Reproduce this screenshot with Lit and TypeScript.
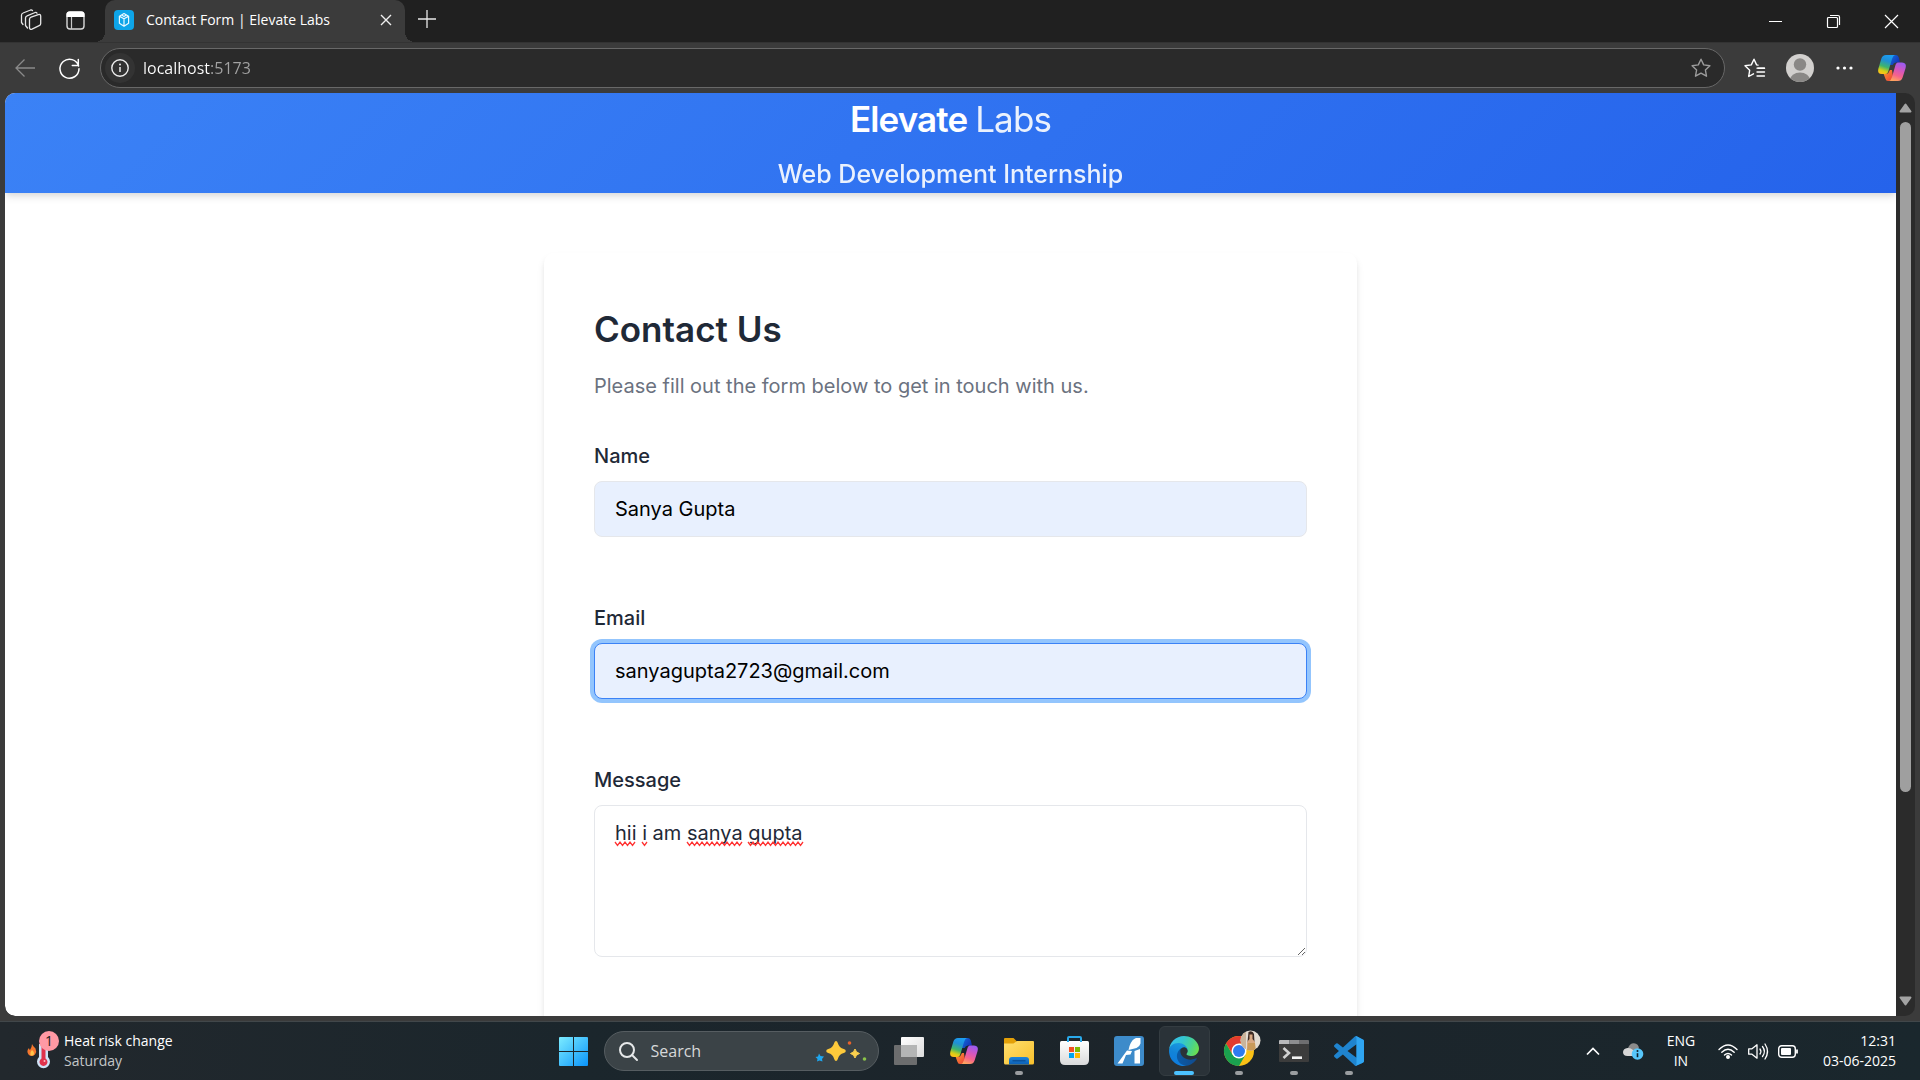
import { LitElement, html, css, svg } from "lit";
import { customElement } from "lit/decorators.js";

const reset = css`
  :host, *, *::before, *::after { box-sizing: border-box; }
  button { margin: 0; padding: 0; border: 0; background: none; color: inherit; font: inherit;
    display: flex; align-items: center; justify-content: center; flex: none; }
  input, textarea { margin: 0; font: inherit; color: inherit; outline: none; }
  svg { display: block; fill: none; overflow: visible; flex: none; }
`;

@customElement("copilot-icon")
class CopilotIcon extends LitElement {
  static styles = [reset, css`:host { display: block; flex: none; }`];
  render() {
    return html`<svg width="28" height="26" viewBox="0 0 28 26" aria-hidden="true">
      <defs>
        <linearGradient id="cool" x1="0.6" y1="0" x2="0.3" y2="1">
          <stop offset="0" stop-color="#1c9df0"/><stop offset=".3" stop-color="#1f8fd6"/>
          <stop offset=".62" stop-color="#3fb56b"/><stop offset=".85" stop-color="#d9cf16"/><stop offset="1" stop-color="#ffc21a"/>
        </linearGradient>
        <linearGradient id="warm" x1="0.7" y1="0" x2="0.35" y2="1">
          <stop offset="0" stop-color="#9a5bf2"/><stop offset=".4" stop-color="#d556bd"/>
          <stop offset=".7" stop-color="#f5628c"/><stop offset="1" stop-color="#ffa35e"/>
        </linearGradient>
        <linearGradient id="deep" x1="0" y1="0" x2="1" y2="0.6">
          <stop offset="0" stop-color="#1273e0"/><stop offset="1" stop-color="#1432b4"/>
        </linearGradient>
        <linearGradient id="ember" x1="0" y1="0" x2="1" y2="1">
          <stop offset="0" stop-color="#ff9a2e"/><stop offset="1" stop-color="#ea3f3a"/>
        </linearGradient>
      </defs>
      <path fill="url(#deep)" d="M13 0h5q2.300 0 2.800 2.500L22 7.500h-4q-2.500 0-3.300 2.500L11 10z"/>
      <path fill="url(#ember)" d="M5.500 18.500H10L12 15h2l1 7q-1.500 4-4 4h-1q-2 0-2.700-2.500z"/>
      <path fill="url(#cool)" d="M8 0h9q-2 .5-3 4l-3.400 11.500Q9.700 19 7 19H4Q-1 19 .4 13.500l3-10Q4.500 0 8 0z"/>
      <path fill="url(#warm)" d="M20 7.500h4q5 .3 3.600 5.500l-3 9.500Q23.500 26 20 26h-9q2-.5 3-4l3.200-11Q18 7.500 20 7.500z"/>
    </svg>`;
  }
}

@customElement("browser-tabs")
class BrowserTabs extends LitElement {
  static styles = [reset, css`
    :host { display: flex; height: 42px; background: #202020; color: #fff;
      font: 14px/20px "Open Sans", "Noto Sans", sans-serif; align-items: stretch; }
    .tools { display: flex; width: 105px; padding-left: 9px; }
    .tools button { width: 44px; height: 40px; }
    .tab { position: relative; display: flex; align-items: center; width: 300px; padding: 0 9px 2px 9px;
      background: #3b3b3b; border-radius: 10px 10px 0 0; }
    .tab::before, .tab::after { content: ""; position: absolute; bottom: 0; width: 10px; height: 10px; }
    .tab::before { right: 100%; background: radial-gradient(circle at 0 0, transparent 10px, #3b3b3b 10px); }
    .tab::after { left: 100%; background: radial-gradient(circle at 100% 0, transparent 10px, #3b3b3b 10px); }
    .title { flex: 1; margin-left: 12px; white-space: nowrap; }
    .tab button { width: 20px; height: 20px; }
    .plus { width: 44px; height: 38px; }
    .window { display: flex; margin-left: auto; }
    .window button { width: 58px; height: 42px; }
  `];
  render() {
    return html`
      <div class="tools">
        <button aria-label="Workspaces">
          <svg width="22" height="22" viewBox="0 0 22 22" stroke="#e6e6e6" stroke-width="1.300" stroke-linejoin="round" stroke-linecap="round">
            <path fill="#202020" d="M9.500 10.200q.2-1.500 1.600-2l7.200-2.600q2.200-.6 2.400 1.400v7.500q0 1.600-1.500 2.200l-7.200 3.400q-2.300.8-2.500-1.400z"/>
            <path d="M5.500 16.500V8.800q.2-1.500 1.600-2l8-3.300q1.200-.4 1.900.6M1.500 13.500V6q.2-1.500 1.600-2l7.500-3q1.200-.3 1.900.6M1.500 13.500l1.500 2M5.500 16.500l2 2.500"/>
          </svg>
        </button>
        <button aria-label="Tab actions">
          <svg width="19" height="19" viewBox="0 0 19 19">
            <rect x="1" y="1" width="17" height="17" rx="3" stroke="#d8d8d8" stroke-width="1.400"/>
            <path fill="#fff" d="M.5 6V3.500Q.5.500 3.500.500h12q3 0 3 3V6z"/><path d="M5.500 6v12" stroke="#c8c8c8" stroke-width="1.200"/>
          </svg>
        </button>
      </div>
      <div class="tab">
        <svg width="20" height="20" viewBox="0 0 20 20">
          <rect width="20" height="20" rx="4" fill="#0ea5e9"/>
          <path d="M10 3.600l4.600 2.600v7L10 16.200l-4.600-3v-7zM5.600 6.400L10 8.800l4.400-2.400M10 8.800v7M7.600 4.900L10 6.400l2.400-1.500" stroke="#e9f8ff" stroke-width="1.200" stroke-linejoin="round"/>
        </svg>
        <span class="title">Contact Form | Elevate Labs</span>
        <button aria-label="Close tab"><svg width="10" height="10" viewBox="0 0 10 10"><path d="M0 0l10 10M10 0L0 10" stroke="#f0f0f0" stroke-width="1.400"/></svg></button>
      </div>
      <button class="plus" aria-label="New tab"><svg width="18" height="18" viewBox="0 0 18 18"><path d="M9 0v18M0 9h18" stroke="#e8e8e8" stroke-width="1.300"/></svg></button>
      <div class="window">
        <button aria-label="Minimize"><svg width="13" height="13" viewBox="0 0 13 13"><path d="M0 6.500h13" stroke="#fff"/></svg></button>
        <button aria-label="Restore"><svg width="13" height="13" viewBox="0 0 13 13" stroke="#fff" stroke-width="1.200"><rect x=".5" y="2.500" width="10" height="10" rx="1"/><path d="M3 .5h8q1.500 0 1.500 1.500v8"/></svg></button>
        <button aria-label="Close"><svg width="13" height="13" viewBox="0 0 13 13"><path d="M0 0l13 13M13 0L0 13" stroke="#fff" stroke-width="1.200"/></svg></button>
      </div>`;
  }
}

const star = svg`<path d="M10 1.200l2.700 5.700 6.200.8-4.500 4.300 1.100 6.200L10 15.200l-5.500 3 1.100-6.200L1.100 7.700l6.200-.8z"/>`;

@customElement("browser-toolbar")
class BrowserToolbar extends LitElement {
  static styles = [reset, css`
    :host { display: flex; align-items: center; height: 51px; padding: 0 3px 0 2px; background: #3b3b3b; color: #fff;
      font: 16px/24px "Open Sans", "Noto Sans", sans-serif; border-top: 1px solid #333; }
    button { width: 45px; height: 40px; }
    .address { flex: 1; display: flex; align-items: center; height: 40px; margin: 0 7px 0 8px; padding: 0 1px 0 4px;
      background: #2a2a2a; border: 1px solid #686868; border-radius: 20px; }
    .info { width: 30px; height: 30px; border-radius: 15px; background: #333; }
    .url { flex: 1; min-width: 0; height: 30px; padding: 0; border: 0; margin-left: 8px;
      color: transparent; background: linear-gradient(90deg, #fff 68px, #a3a3a3 68px); background-clip: text; -webkit-background-clip: text; }
    .copilot { width: 50px; }
  `];
  render() {
    return html`
      <button aria-label="Back"><svg width="20" height="18" viewBox="0 0 20 18"><path d="M20 9H1M9.500.500L1 9l8.500 8.500" stroke="#8a8a8a" stroke-width="1.300"/></svg></button>
      <button aria-label="Refresh"><svg width="21" height="21" viewBox="0 0 21 21" stroke="#fff" stroke-width="1.500" stroke-linecap="round"><path d="M19.600 8A9.500 9.500 0 1 0 20 10.800M19.300 1.500v6h-6"/></svg></button>
      <div class="address">
        <button class="info" aria-label="Site information"><svg width="18" height="18" viewBox="0 0 18 18"><circle cx="9" cy="9" r="8.200" stroke="#eee" stroke-width="1.400"/><path d="M9 8v5" stroke="#eee" stroke-width="1.500"/><circle cx="9" cy="5.500" r="1" fill="#eee"/></svg></button>
        <input class="url" aria-label="Address" value="localhost:5173">
        <button aria-label="Add to favorites"><svg width="20" height="20" viewBox="0 0 20 20" stroke="#9c9c9c" stroke-width="1.400" stroke-linejoin="round">${star}</svg></button>
      </div>
      <button aria-label="Favorites"><svg width="21" height="20" viewBox="0 0 21 20" stroke="#fff" stroke-width="1.400" stroke-linejoin="round" stroke-linecap="round">
        <path d="M9.500 15.800L4.700 18.500l1-6.300L1 7.800l6.300-.9L10 1.200l2.600 5.700 1.400.2"/><path d="M14 10.200h6.500M13 14h7.500M14 17.800"/><path d="M13 10.200h7.500M13 18h7.500" stroke-width="1.300"/></svg></button>
      <button aria-label="Profile"><svg width="28" height="28" viewBox="0 0 28 28">
        <defs><clipPath id="round"><circle cx="14" cy="14" r="14"/></clipPath></defs>
        <g clip-path="url(#round)"><rect width="28" height="28" fill="#d2d0ce"/><circle cx="14" cy="10.500" r="6.200" fill="#8a8886"/><ellipse cx="14" cy="26" rx="10" ry="7.500" fill="#8a8886"/></g></svg></button>
      <button aria-label="Settings and more"><svg width="17" height="4" viewBox="0 0 17 4"><g fill="#fff"><circle cx="2" cy="2" r="1.600"/><circle cx="8.500" cy="2" r="1.600"/><circle cx="15" cy="2" r="1.600"/></g></svg></button>
      <button class="copilot" aria-label="Copilot"><copilot-icon></copilot-icon></button>`;
  }
}

@customElement("contact-page")
class ContactPage extends LitElement {
  static styles = [reset, css`
    :host { display: flex; flex: 1; min-height: 0; padding: 0 5px 5px; background: #3b3b3b; }
    .frame { display: flex; flex: 1; min-width: 0; border-radius: 10px; overflow: hidden; background: #2b2b2b; }
    .page { flex: 1; min-width: 0; overflow: hidden; background: #fff; color: #1f2937;
      border-radius: 0 0 0 10px; font: 20px/30px Inter, sans-serif; }
    .banner { display: flex; flex-direction: column; align-items: center; gap: 10px; color: #fff;
      background: linear-gradient(135deg, #3b82f6, #2563eb);
      box-shadow: 0 5px 8px -1px rgba(0,0,0,.1), 0 3px 5px -1px rgba(0,0,0,.06); }
    h1, h2, p { margin: 0; }
    h1 { font-size: 35px; line-height: 52px; font-weight: 600; letter-spacing: -0.025em; }
    h1 span { font-weight: 400; opacity: .9; }
    .banner p { font-size: 25px; line-height: 38px; font-weight: 500; opacity: .9; }
    .card { max-width: 813px; margin: 60px auto; padding: 50px; border-radius: 10px; background: #fff;
      box-shadow: 0 5px 8px -1px rgba(0,0,0,.1), 0 3px 5px -1px rgba(0,0,0,.06); }
    h2 { font-size: 35px; line-height: 52px; font-weight: 600; }
    .intro { margin: 16px 0 40px; color: #6b7280; }
    .field { display: flex; flex-direction: column; gap: 10px; margin-bottom: 66px; position: relative; }
    label { font-weight: 500; }
    .box { width: 100%; padding: 12px 20px; border: 1px solid #e5e7eb; border-radius: 8px; background: #fff; }
    input.box { height: 56px; background: #e8f0fe; color: #000; }
    textarea.box { display: block; height: 152px; resize: vertical; }
    input.active { border-color: #3b82f6; box-shadow: 0 0 0 4px #93c5fd; }
    .squiggles { position: absolute; left: 21px; top: 76px; }
    .scroll { display: flex; flex-direction: column; align-items: center; width: 19px; padding: 10px 0; }
    .track { flex: 1; width: 11px; margin: 9px 0; }
    .thumb { height: 77.5%; border-radius: 6px; background: #9f9f9f; }
  `];

  private wave(from: number, to: number) {
    let d = `M${from} 0`;
    for (let x = from, i = 1; x + 2.5 <= to; x += 2.5, i++) d += `l2.5 ${i % 2 ? 3.5 : -3.5}`;
    return svg`<path d=${d} stroke="#f33" stroke-width="1.300"/>`;
  }

  render() {
    return html`<div class="frame">
      <main class="page">
        <header class="banner">
          <h1>Elevate <span>Labs</span></h1>
          <p>Web Development Internship</p>
        </header>
        <form class="card">
          <h2>Contact Us</h2>
          <p class="intro">Please fill out the form below to get in touch with us.</p>
          <div class="field"><label for="name">Name</label><input class="box" id="name" type="text" value="Sanya Gupta"></div>
          <div class="field"><label for="email">Email</label><input class="box active" id="email" type="email" value="sanyagupta2723@gmail.com"></div>
          <div class="field"><label for="message">Message</label>
            <textarea class="box" id="message" .value=${"hii i am sanya gupta"}></textarea>
            <svg class="squiggles" width="190" height="5" viewBox="0 -1 190 5" aria-hidden="true">
              ${this.wave(0, 22)}${this.wave(27, 32)}${this.wave(72, 128)}${this.wave(133, 188)}
            </svg>
          </div>
        </form>
      </main>
      <div class="scroll">
        <svg width="13" height="10" viewBox="0 0 13 10"><path d="M6.500 1.500L11.500 8.500h-10z" fill="#a3a3a3" stroke="#a3a3a3" stroke-width="2" stroke-linejoin="round"/></svg>
        <div class="track"><div class="thumb"></div></div>
        <svg width="13" height="10" viewBox="0 0 13 10"><path d="M6.500 8.500L11.500 1.500h-10z" fill="#a3a3a3" stroke="#a3a3a3" stroke-width="2" stroke-linejoin="round"/></svg>
      </div>
    </div>`;
  }
}

const folder = html`<svg width="30" height="27" viewBox="0 0 30 27">
  <defs><linearGradient id="fd" x1="0" y1="0" x2="1" y2="1"><stop offset="0" stop-color="#ffdf6e"/><stop offset="1" stop-color="#f8c02c"/></linearGradient>
  <linearGradient id="fb" x1="0" y1="0" x2="0" y2="1"><stop offset="0" stop-color="#1b86dd"/><stop offset="1" stop-color="#0d5fb4"/></linearGradient></defs>
  <path fill="#e3a008" d="M0 1q0-1 1-1h8.500l3.500 3.500V8H0z"/><path fill="url(#fd)" d="M0 5.500h9.500L13 3h16q1 0 1 1v21q0 1.500-1.500 1.500h-27Q0 26.500 0 25z"/>
  <path fill="url(#fb)" d="M5 26.500V22q0-3 3-3h14q3 0 3 3v4.500z"/><path d="M8.500 22.800h13" stroke="#0a4c92" stroke-width="1.200"/></svg>`;

const store = html`<svg width="29" height="30" viewBox="0 0 29 30">
  <defs><linearGradient id="bag" x1="0" y1="0" x2="0" y2="1"><stop offset="0" stop-color="#fff"/><stop offset="1" stop-color="#d9dadb"/></linearGradient></defs>
  <path fill="url(#bag)" d="M0 6.500q0-1.500 1.500-1.500h26q1.500 0 1.500 1.500V24q0 5-5 5H5q-5 0-5-5z"/>
  <path d="M8 6V2q0-1 1-1h11q1 0 1 1v4" stroke="#29a9ea" stroke-width="2"/>
  <path fill="#f25022" d="M9 11h5v5H9z"/><path fill="#7fba00" d="M15 11h5v5h-5z"/><path fill="#00a4ef" d="M9 17h5v5H9z"/><path fill="#ffb900" d="M15 17h5v5h-5z"/></svg>`;

const slash = html`<svg width="30" height="30" viewBox="0 0 30 30">
  <rect width="30" height="30" rx="3" fill="#3d8bca"/>
  <path fill="#fff" d="M15.500 10Q18 3 22 2h4.500v5.500q-1 3.500-4 4.500l-8 2zM13 14.500l5 .5-1.500 3.500-4.500.5-3.500 8.500H3.500zM20.500 15l5.500-2v14.500h-5.500z"/></svg>`;

const edge = html`<svg width="30" height="30" viewBox="0 0 256 256">
  <defs><linearGradient id="e1" x1=".2" y1=".5" x2="1" y2=".5"><stop offset="0" stop-color="#0c59a4"/><stop offset="1" stop-color="#114a8b"/></linearGradient>
  <linearGradient id="e2" x1=".6" y1="0" x2=".3" y2="1"><stop offset="0" stop-color="#1b9de2"/><stop offset=".5" stop-color="#1283d8"/><stop offset="1" stop-color="#0d7be0"/></linearGradient>
  <linearGradient id="e3" x1="0" y1=".3" x2="1" y2=".6"><stop offset="0" stop-color="#35c1f1"/><stop offset=".4" stop-color="#34c5d0"/><stop offset=".75" stop-color="#4bd38a"/><stop offset="1" stop-color="#6bdf4f"/></linearGradient></defs>
  <path fill="url(#e1)" d="M231 190.500c-3.400 1.800-6.900 3.300-10.500 4.600-11.500 4.300-23.600 6.500-35.900 6.500-47.300 0-88.500-32.500-88.500-74.300.1-11.400 6.400-21.900 16.400-27.300-42.800 1.800-53.800 46.400-53.800 72.500 0 74 68.100 81.400 82.800 81.400 7.900 0 19.800-2.300 27-4.600l1.300-.4c27.600-9.500 51-28.100 66.600-52.800 1.200-1.900.6-4.300-1.200-5.500-1.300-.8-2.900-.9-4.200-.1z"/>
  <path fill="url(#e2)" d="M105.700 241.400c-8.900-5.500-16.600-12.800-22.700-21.300-26.300-36-18.400-86.500 17.600-112.800 3.800-2.700 7.700-5.200 11.900-7.200 3.100-1.500 8.400-4.100 15.500-4 10.100.1 19.600 4.900 25.700 13 4 5.400 6.300 11.900 6.400 18.700 0-.2 24.500-79.600-80-79.600-43.900 0-80 41.700-80 78.200-.2 19.300 4 38.500 12.100 56 27.600 58.800 94.800 87.600 156.400 67.100-21.100 6.600-44.100 3.700-62.900-8.100z"/>
  <path fill="url(#e3)" d="M152.300 148.900c-.9 1-3.400 2.500-3.400 5.600 0 2.600 1.700 5.200 4.800 7.300 14.300 10 41.400 8.600 41.500 8.600 10.700 0 21.100-2.900 30.300-8.300 18.800-11 30.400-31.100 30.400-52.900.3-22.400-8-37.300-11.300-43.900C223.200 23.900 177.700 0 128.200 0c-70 0-127 56.200-128 126.200.5-36.500 36.800-66 80-66 3.500 0 23.500.3 42 10.100 16.300 8.600 24.900 18.900 30.800 29.200 6.200 10.700 7.300 24.100 7.300 29.500s-2.700 13.300-8 19.900z"/></svg>`;

const chrome = html`<svg width="30" height="30" viewBox="0 0 30 30">
  <defs><clipPath id="pic"><circle cx="26.500" cy="4.500" r="10"/></clipPath></defs>
  <circle cx="15" cy="15" r="15" fill="#fbc116"/>
  <path fill="#e33b2e" d="M2 7.500A15 15 0 0 1 28 7.500H15L9 19z"/>
  <path fill="#1aa14f" d="M2 7.500A15 15 0 0 0 15 30l6.500-11.200L15 15 8.500 18.800z"/>
  <circle cx="15" cy="15" r="7.500" fill="#fff"/><circle cx="15" cy="15" r="6" fill="#2f7bef"/>
  <g clip-path="url(#pic)"><rect x="16" y="-6" width="21" height="21" fill="#e3dcd2"/><path fill="#c9b49b" d="M16-6h6v21h-6z"/>
    <path fill="#3c2a22" d="M24.500-4q4-2 5.500 2l.5 8h-7z"/><path fill="#d9a983" d="M25.500-1.500h3V3l2.500 3v9h-8V6l2.500-3z"/><path fill="#c89a5a" d="M24 7h7l1 8h-9z"/></g></svg>`;

const terminal = html`<svg width="30" height="22" viewBox="0 0 30 22">
  <path fill="#3c3c3c" d="M0 4h30v17q0 1-1 1H1q-1 0-1-1z"/><path fill="#b9b9bb" d="M1 0h9.500v4H0V1q0-1 1-1z"/><path fill="#8e8e90" d="M10.500 0H20v4h-9.500z"/><path fill="#6e6e70" d="M20 0h9q1 0 1 1v3H20z"/>
  <path d="M4.500 8l5.500 5-5.500 5" stroke="#d0d0d0" stroke-width="2.600"/><path d="M13 17.700h10" stroke="#f2f2f2" stroke-width="2.600"/></svg>`;

const code = html`<svg width="30" height="30" viewBox="0 0 100 100">
  <path fill="#1f84cf" d="M96 12L75.500 1.200a6 6 0 0 0-7 1.200L29.700 38 12.500 25a4 4 0 0 0-5.300.2l-5.600 5.100a4 4 0 0 0 0 6.200L16.400 50 1.600 63.500a4 4 0 0 0 0 6.200l5.600 5.100a4 4 0 0 0 5.300.2L29.700 62l38.800 35.500a6 6 0 0 0 7 1.200L96 89a6 6 0 0 0 4-5.600V17.500A6 6 0 0 0 96 12zM75 72.700L45 50l30-22.700z"/>
  <path fill="#2fa5f2" d="M75.500 1.200L96 12a6 6 0 0 1 4 5.500v66A6 6 0 0 1 96 89l-20.500 9.700a6 6 0 0 1-7-1.200Q75 101 75 92V8Q75 0 68.500 2.400a6 6 0 0 1 7-1.200z"/></svg>`;

const taskView = html`<svg width="30" height="28" viewBox="0 0 30 28">
  <defs><linearGradient id="tv" x1="0" y1="0" x2="1" y2="1"><stop offset="0" stop-color="#fff"/><stop offset="1" stop-color="#dcdcdc"/></linearGradient></defs>
  <rect y="8" width="23" height="20" rx="1" fill="#6c6d6e"/><rect x="7" width="23" height="20" rx="1" fill="url(#tv)"/><path fill="#b4b5b5" d="M7 8h16v12H7z"/></svg>`;

const apps = [
  { label: "Task View", icon: taskView, state: "" },
  { label: "Copilot", icon: html`<copilot-icon></copilot-icon>`, state: "" },
  { label: "File Explorer", icon: folder, state: "open" },
  { label: "Microsoft Store", icon: store, state: "" },
  { label: "Launcher", icon: slash, state: "" },
  { label: "Microsoft Edge", icon: edge, state: "open current" },
  { label: "Google Chrome", icon: chrome, state: "open" },
  { label: "Terminal", icon: terminal, state: "open" },
  { label: "Visual Studio Code", icon: code, state: "open" },
];

@customElement("task-bar")
class TaskBar extends LitElement {
  static styles = [reset, css`
    :host { display: grid; grid-template-columns: 1fr auto 1fr; height: 59px; color: #fff;
      background: linear-gradient(90deg, #22282d, #1b262c 30%, #1c242a 60%, #1a272d); border-top: 1px solid #41474a;
      font: 14px/20px "Open Sans", "Noto Sans", sans-serif; }
    .weather { justify-self: start; align-items: center; padding-left: 27px; gap: 5px; text-align: left; }
    .lines { display: flex; flex-direction: column; }
    .dim { color: #c3c6c8; }
    .center { display: flex; align-items: center; padding-left: 2px; }
    .app { position: relative; width: 55px; height: 56px; }
    .app::before { content: ""; position: absolute; inset: 3px 2px; border-radius: 6px; }
    .app > * { position: relative; }
    .open::after { content: ""; position: absolute; bottom: 4px; width: 8px; height: 4px; border-radius: 2px; background: #9a9da0; }
    .current::before { background: #2a3238; border: 1px solid #343c41; }
    .current::after { width: 20px; background: #4cc2ff; }
    .search { display: flex; align-items: center; width: 275px; height: 40px; margin: 0 3px; padding: 0 12px 0 14px;
      border: 1px solid #565d61; border-radius: 20px; background: #3b4347; font-size: 16px; }
    .search input { flex: 1; min-width: 0; margin-left: 13px; padding: 0; border: 0; background: none; color: #d6d8d9; }
    .search input::placeholder { color: #d6d8d9; opacity: 1; }
    .tray { display: flex; align-items: center; justify-content: flex-end; padding-right: 24px; }
    .chevron, .cloud { width: 40px; height: 40px; }
    .lang { width: 56px; text-align: center; }
    .status { gap: 10px; height: 40px; margin: 0 25px 0 9px; }
    .clock { text-align: right; }
  `];
  render() {
    return html`
      <button class="weather" aria-label="Weather">
        <svg width="32" height="40" viewBox="0 0 32 40">
          <path fill="#f4772e" d="M5 13q1 2.500 3.500 4.500 1.500 3-.5 6-3.500 3-6.500 0-2.500-3.500.5-6.500 0 1.500 1 2Q5 16 5 13z"/><path fill="#ffc54a" d="M5 19q3 2.500 1.500 5-2 1.300-3.200-.3Q2.500 21.500 5 19z"/>
          <path fill="#cfe3f7" d="M12 13h9v13a6.500 6.500 0 1 1-9 0z"/><path fill="#e0324c" d="M14.500 15h4v12.500a4 4 0 1 1-4 0z"/><circle cx="17.500" cy="30" r="1" fill="#ffb3bd"/>
          <circle cx="22" cy="10" r="10" fill="#ff99a4"/><text x="22" y="15" text-anchor="middle" font-size="14" fill="#1a1a1a">1</text>
        </svg>
        <span class="lines"><span>Heat risk change</span><span class="dim">Saturday</span></span>
      </button>
      <div class="center">
        <button class="app" aria-label="Start"><svg width="29" height="29" viewBox="0 0 29 29">
          <defs><linearGradient id="win" gradientUnits="userSpaceOnUse" x1="0" y1="0" x2="29" y2="29"><stop offset="0" stop-color="#7cecff"/><stop offset="1" stop-color="#0a94fb"/></linearGradient></defs>
          <path fill="url(#win)" d="M0 1q0-1 1-1h13v14H0zM15 0h13q1 0 1 1v13H15zM0 15h14v14H1q-1 0-1-1zM15 15h14v13q0 1-1 1H15z"/></svg></button>
        <div class="search">
          <svg width="19" height="19" viewBox="0 0 19 19" stroke="#e6e8e9" stroke-width="2" stroke-linecap="round"><circle cx="8" cy="8" r="7"/><path d="M13 13l5 5"/></svg>
          <input type="search" aria-label="Search" placeholder="Search">
          <svg width="50" height="20" viewBox="0 0 50 20">
            <path fill="#fdc93b" d="M20 0q1.200 0 1.800 2 1.400 4.800 6 6 2 .6 2 2t-2 2q-4.600 1.200-6 6-.6 2-1.800 2t-1.800-2q-1.400-4.800-6-6-2-.6-2-2t2-2q4.600-1.200 6-6 .6-2 1.800-2z"/>
            <path fill="#fbd04e" d="M39 8q.8 3.500 4.500 4.500-3.700 1-4.500 4.500-.8-3.500-4.500-4.500 3.700-1 4.500-4.500z" stroke="#fbd04e"/>
            <path fill="#1ea7f0" d="M3 12.500l1.500 2.500 3.500.500-2 2.500.5 2.500-3-1-2.500 1 .5-2.500-2-2 2.500-.500z"/>
            <circle cx="33.500" cy="2" r="1.800" fill="#e8622c"/><circle cx="48.500" cy="18" r="1.800" fill="#8bc34a"/></svg>
        </div>
        ${apps.map(a => html`<button class="app ${a.state}" aria-label=${a.label}>${a.icon}</button>`)}
      </div>
      <div class="tray">
        <button class="chevron" aria-label="Show hidden icons"><svg width="14" height="8" viewBox="0 0 14 8"><path d="M1 7.500L7 1.500l6 6" stroke="#fff" stroke-width="1.700"/></svg></button>
        <button class="cloud" aria-label="OneDrive"><svg width="20" height="17" viewBox="0 0 20 17">
          <path fill="#8b8b8b" d="M5 5Q7 0 11 .3q4.500.500 5 5L10 9z"/><path fill="#d6d6d6" d="M4.500 5q3-.5 5.500 2l5 6H4.500Q0 13 0 9q.3-3.500 4.500-4z"/>
          <circle cx="14.500" cy="11" r="5.800" fill="#57c7fb"/><path d="M14.500 10.200v4" stroke="#10222c" stroke-width="1.600"/><circle cx="14.500" cy="8" r="1" fill="#10222c"/></svg></button>
        <button class="lang"><span class="lines"><span>ENG</span><span>IN</span></span></button>
        <button class="status" aria-label="Network, volume and battery">
          <svg width="20" height="15" viewBox="0 0 20 15" stroke="#fff" stroke-width="1.400" stroke-linecap="round"><path d="M1 5.500q9-9 18 0M3.800 8.300q6.200-6 12.400 0M6.500 11q3.500-3.200 7 0"/><circle cx="10" cy="13" r="1.300" fill="#fff"/></svg>
          <svg width="20" height="17" viewBox="0 0 20 17" stroke="#fff" stroke-width="1.300" stroke-linejoin="round" stroke-linecap="round"><path d="M.7 5.800h3.300L9 1.800v13.400l-5-4H.7zM12 6q1.800 2.500 0 5M14.500 3.500q3.800 5 0 10M17 1q5 7.500 0 15"/></svg>
          <svg width="20" height="13" viewBox="0 0 20 13"><rect x=".7" y=".7" width="16.600" height="11.600" rx="3" stroke="#fff" stroke-width="1.400"/><rect x="3" y="3" width="10" height="7" rx="1" fill="#fff"/><path d="M19 4.500v4" stroke="#fff" stroke-width="1.800"/></svg>
        </button>
        <button class="clock"><span class="lines"><span>12:31</span><span>03-06-2025</span></span></button>
      </div>`;
  }
}

@customElement("app-root")
class AppRoot extends LitElement {
  static styles = css`:host { display: flex; flex-direction: column; height: 100vh; overflow: hidden; }`;
  render() {
    return html`<browser-tabs></browser-tabs><browser-toolbar></browser-toolbar><contact-page></contact-page><task-bar></task-bar>`;
  }
}
